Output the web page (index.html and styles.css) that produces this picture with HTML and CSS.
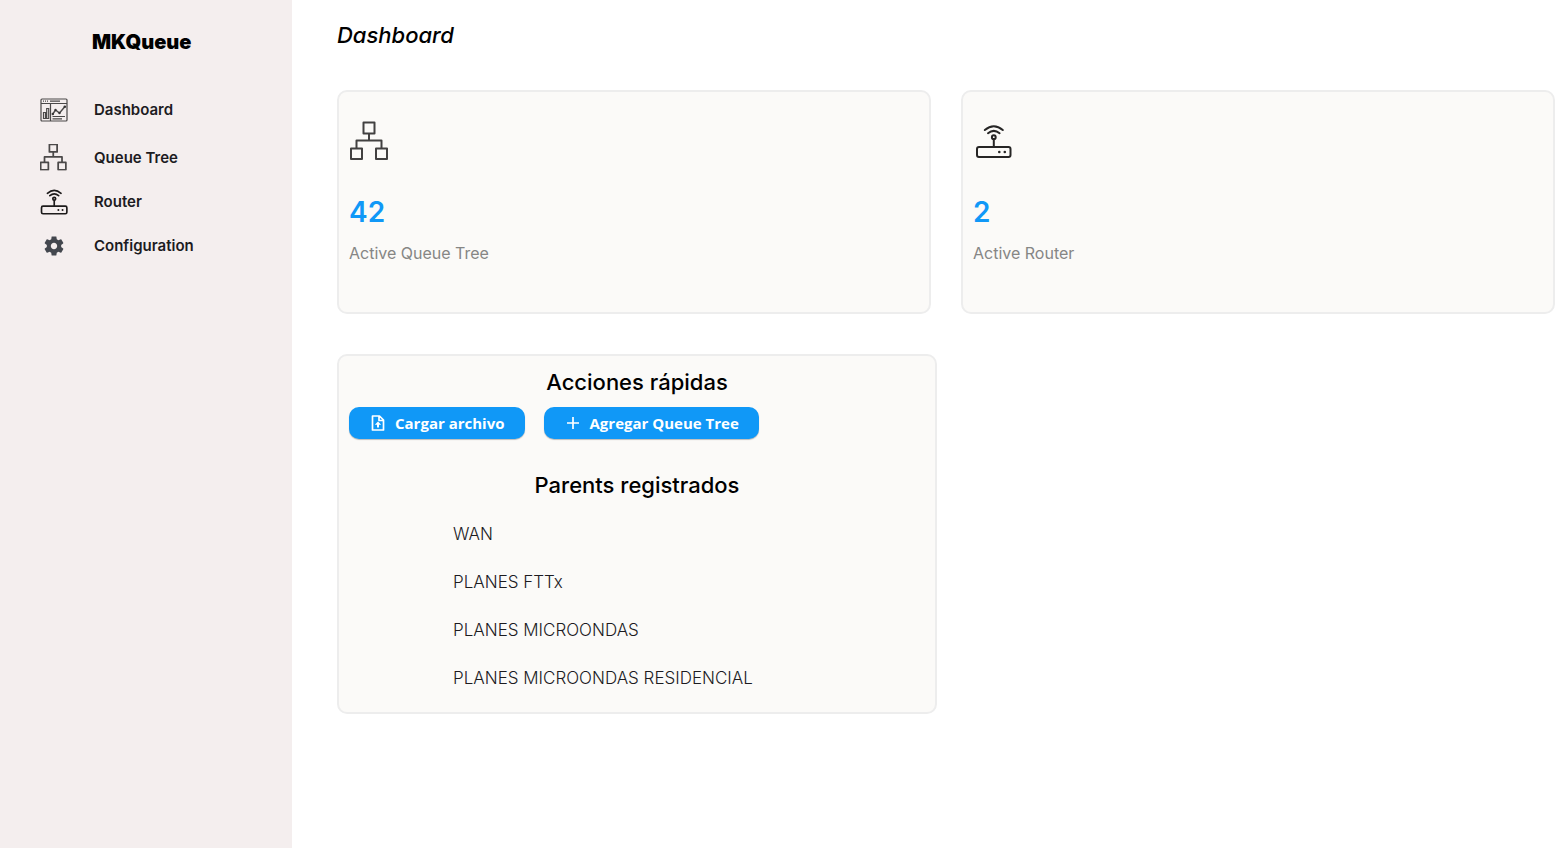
FILE: index.html
```html
<!DOCTYPE html>
<html lang="es">
<head>
<meta charset="utf-8">
<meta name="viewport" content="width=device-width, initial-scale=1">
<title>MKQueue</title>
<link rel="stylesheet" href="styles.css">
</head>
<body>
<svg class="sprite" aria-hidden="true">
  <symbol id="tree" viewBox="0 0 40 40">
    <g fill="none" stroke="currentColor" stroke-linejoin="round">
      <rect x="14.5" y="2.5" width="11" height="11"/>
      <rect x="2" y="28.500" width="11" height="10.500"/>
      <rect x="27" y="28.500" width="11" height="10.500"/>
      <path d="M20 13.500v7M7.500 28.500v-8h25v8"/>
    </g>
  </symbol>
  <symbol id="router" viewBox="0 0 40 40">
    <g fill="none" stroke="currentColor" stroke-linecap="round">
      <rect x="4" y="27" width="33.500" height="10" rx="2"/>
      <circle cx="20.800" cy="17.200" r="1.900"/>
      <path d="M20.800 19.500V27M15 13.200q5.800-4.600 11.600 0M11.800 10q9-7.600 18 0"/>
    </g>
    <circle cx="26.300" cy="32" r="1.300" fill="currentColor"/>
    <circle cx="31.800" cy="32" r="1.300" fill="currentColor"/>
  </symbol>
</svg>
<div class="layout">
  <aside class="sidebar">
    <p class="brand">MKQueue</p>
    <nav class="nav">
      <a class="nav-link nav-link-tall" href="#dashboard">
        <svg class="nav-icon" viewBox="0 0 28 28" aria-hidden="true">
          <g fill="none" stroke="#4a4848" stroke-width="1.2">
            <rect x="1" y="3" width="26" height="22" rx="1"/>
            <path d="M1 7.500h26M10.500 7.500V25"/>
            <path d="M3 5.200h1M5 5.200h1M7 5.200h1M10 5.200h10"/>
            <path d="M3.500 22.500v-6h2v6zM6.700 22.500v-10h2v10z"/>
            <path d="M12.500 18.500l3-4.500 4 3 5.500-6.500" stroke-width="1.4"/>
            <path d="M12.500 20.500H25M12.500 22.800H22"/>
          </g>
          <g fill="#383636"><circle cx="12.800" cy="18" r="1.200"/><circle cx="15.500" cy="14" r="1.200"/><circle cx="19.500" cy="17" r="1.200"/><circle cx="24.800" cy="10.800" r="1.300"/></g>
        </svg>
        <span>Dashboard</span>
      </a>
      <a class="nav-link" href="#queue-tree">
        <svg class="nav-icon nav-icon-tree" viewBox="1 2 38 38" aria-hidden="true"><use href="#tree"/></svg>
        <span>Queue Tree</span>
      </a>
      <a class="nav-link" href="#router-list">
        <svg class="nav-icon nav-icon-router" viewBox="2 3 37 37" aria-hidden="true"><use href="#router" width="40" height="40"/></svg>
        <span>Router</span>
      </a>
      <a class="nav-link" href="#configuration">
        <svg class="nav-icon nav-icon-gear" viewBox="0 0 24 24" aria-hidden="true">
          <path fill="currentColor" d="M19.140 12.940c.04-.3.060-.61.060-.94 0-.32-.02-.64-.07-.94l2.030-1.580c.18-.14.230-.41.120-.61l-1.920-3.320c-.12-.22-.37-.29-.59-.22l-2.390.96c-.5-.38-1.030-.7-1.620-.94l-.36-2.540c-.04-.24-.24-.41-.48-.41h-3.840c-.24 0-.43.170-.47.410l-.36 2.540c-.59.240-1.130.570-1.620.940l-2.390-.96c-.22-.08-.47 0-.59.220L2.740 8.870c-.12.210-.08.470.12.610l2.030 1.580c-.05.3-.09.630-.09.940s.020.640.070.940l-2.030 1.580c-.18.140-.23.410-.12.610l1.920 3.320c.12.220.37.290.59.220l2.390-.96c.5.380 1.030.7 1.620.940l.36 2.540c.05.240.24.410.48.410h3.840c.24 0 .44-.17.470-.41l.36-2.540c.59-.24 1.130-.56 1.620-.94l2.390.96c.22.080.47 0 .59-.22l1.920-3.320c.12-.22.070-.47-.12-.61l-2.010-1.580zM12 15.200c-1.770 0-3.200-1.430-3.200-3.200s1.430-3.200 3.200-3.200 3.200 1.430 3.200 3.200-1.430 3.200-3.200 3.200z"/>
        </svg>
        <span>Configuration</span>
      </a>
    </nav>
  </aside>
  <main class="main">
    <h1 class="page-title">Dashboard</h1>
    <section class="stats">
      <article class="card stat">
        <svg class="stat-icon stat-icon-tree" aria-hidden="true"><use href="#tree"/></svg>
        <p class="stat-value">42</p>
        <p class="stat-label">Active Queue Tree</p>
      </article>
      <article class="card stat">
        <svg class="stat-icon" aria-hidden="true"><use href="#router"/></svg>
        <p class="stat-value">2</p>
        <p class="stat-label">Active Router</p>
      </article>
    </section>
    <section class="card panel">
      <h2 class="panel-title">Acciones rápidas</h2>
      <div class="actions">
        <button class="button" type="button">
          <svg class="button-icon" viewBox="0 0 18 18" aria-hidden="true"><path d="M3.500 2h7l4 4v10h-11zM10 2v4.500h4.500" fill="none" stroke="currentColor" stroke-width="1.7" stroke-linejoin="round"/><path d="M9 7.500l3.200 3.200h-2.200v2.800H8v-2.800H5.800z" fill="currentColor"/></svg>
          <span>Cargar archivo</span>
        </button>
        <button class="button" type="button">
          <svg class="button-icon" viewBox="0 0 18 18" aria-hidden="true"><path d="M9 3v12M3 9h12" fill="none" stroke="currentColor" stroke-width="1.7"/></svg>
          <span>Agregar Queue Tree</span>
        </button>
      </div>
      <h2 class="panel-title">Parents registrados</h2>
      <ul class="parents">
        <li>WAN</li>
        <li>PLANES FTTx</li>
        <li>PLANES MICROONDAS</li>
        <li>PLANES MICROONDAS RESIDENCIAL</li>
      </ul>
    </section>
  </main>
</div>
</body>
</html>
```
FILE: styles.css
```css
* {
  box-sizing: border-box;
}

body {
  margin: 0;
  background: #fff;
  color: #000;
  font-family: Inter, "Liberation Sans", sans-serif;
}

h1, h2, p, ul {
  margin: 0;
  padding: 0;
}

.sprite {
  position: absolute;
  width: 0;
  height: 0;
}

.layout {
  display: flex;
  min-height: 100vh;
}

.sidebar {
  flex: 0 0 292px;
  padding: 28px 40px;
  background: #f4eeee;
}

.brand {
  padding-left: 52px;
  font-size: 20px;
  line-height: 28px;
  font-weight: 900;
}

.nav {
  display: flex;
  flex-direction: column;
  margin-top: 28px;
}

.nav-link {
  display: flex;
  align-items: center;
  gap: 26px;
  height: 44px;
  color: #1c1b1f;
  font-size: 15px;
  line-height: 20px;
  font-weight: 600;
  text-decoration: none;
}

.nav-link-tall {
  height: 52px;
}

.nav-icon {
  width: 28px;
  height: 28px;
}

.nav-icon-tree {
  color: #4b4949;
  stroke-width: 2.5;
}

.nav-icon-router {
  color: #1d1b1b;
  stroke-width: 2.2;
}

.nav-icon-gear {
  padding: 2px;
  color: #43474e;
}

.main {
  flex: 1;
  min-width: 0;
  padding: 20px 13px 20px 45px;
}

.page-title {
  font-size: 22px;
  line-height: 30px;
  font-style: italic;
  font-weight: 500;
}

.card {
  border: 2px solid #ededed;
  border-radius: 10px;
  background: #fbfaf8;
}

.stats {
  display: grid;
  grid-template-columns: 1fr 1fr;
  gap: 30px;
  margin-top: 40px;
}

.stat {
  padding: 28px 10px 46px;
}

.stat-icon {
  display: block;
  width: 40px;
  height: 40px;
  color: #262525;
  stroke-width: 2;
}

.stat-icon-tree {
  color: #424141;
}

.stat-value {
  margin-top: 32px;
  color: #1098f7;
  font-size: 28px;
  line-height: 40px;
  font-weight: 600;
}

.stat-label {
  margin-top: 8px;
  color: #868685;
  font-size: 16px;
  line-height: 26px;
}

.panel {
  max-width: 600px;
  margin-top: 40px;
  padding: 10px;
}

.panel-title {
  font-size: 22px;
  line-height: 32px;
  font-weight: 500;
  text-align: center;
}

.actions {
  display: flex;
  flex-wrap: wrap;
  gap: 19px;
  margin: 9px 0 30px;
}

.button {
  display: flex;
  align-items: center;
  gap: 8px;
  height: 32px;
  padding: 0 20px;
  border: 0;
  border-radius: 10px;
  background: #1098f7;
  box-shadow: 0 1px 1px rgba(0, 0, 0, 0.25);
  color: #fff;
  font-family: "Open Sans", "Noto Sans", sans-serif;
  font-size: 15px;
  line-height: 20px;
  font-weight: 700;
}

.button-icon {
  width: 18px;
  height: 18px;
}

.parents {
  display: flex;
  flex-direction: column;
  margin-top: 9px;
  padding-left: 104px;
  color: #1c1b1f;
  font-size: 17px;
  line-height: 48px;
  font-weight: 300;
  list-style: none;
}
```
